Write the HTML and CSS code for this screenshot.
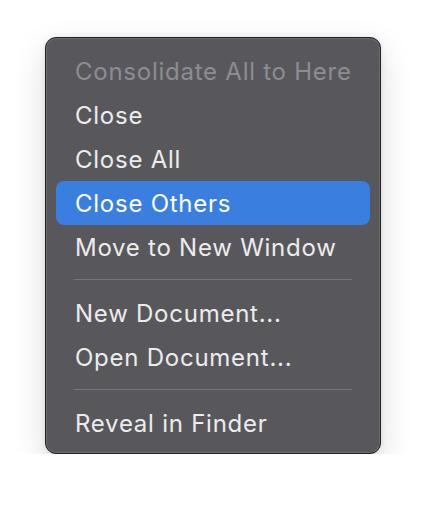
FILE: index.html
```html
<!DOCTYPE html>
<html lang="en">

<head>
    <meta charset="UTF-8">
    <meta name="viewport" content="width=device-width, initial-scale=1.0">
    <title>Tab Menu</title>
    <link rel="stylesheet" href="styles.css">
</head>

<body>

    <!-- Context menu -->
    <div class="menu">
        <div class="item disabled">Consolidate All to Here</div>
        <div class="item">Close</div>
        <div class="item">Close All</div>
        <div class="item active">Close Others</div>
        <div class="item">Move to New Window</div>

        <div class="separator"></div>

        <div class="item">New Document...</div>
        <div class="item">Open Document...</div>

        <div class="separator"></div>

        <div class="item">Reveal in Finder</div>
    </div>

</body>

</html>
```

FILE: styles.css
```css
/* Global styles */
* {
    margin: 0;
    padding: 0;
    box-sizing: border-box;
}

body {
    font-family: 'Inter', 'Noto Sans', sans-serif;
    background-color: #fff;
    padding: 37px 0 0 45px;
}

/* Menu panel */
.menu {
    width: 336px;
    height: 417px;
    background-color: #58585c;
    border: 1px solid #1f1f21;
    border-radius: 11px;
    box-shadow: inset 0 0 0 1px #6e6e72, 0 12px 32px rgba(0, 0, 0, 0.15), 0 0 6px rgba(0, 0, 0, 0.08);
    padding: 11px 10px 0;
}

/* Menu rows */
.item {
    height: 44px;
    line-height: 46px;
    padding-left: 19px;
    border-radius: 8px;
    font-size: 24px;
    letter-spacing: 0.75px;
    color: #ececec;
    white-space: nowrap;
}

.item.disabled {
    color: #8d8d91;
}

.item.active {
    background-color: #3a7fe0;
    color: #fff;
}

/* Separator */
.separator {
    height: 1px;
    margin: 10px 18px 11px;
    background-color: #77777b;
}
```
